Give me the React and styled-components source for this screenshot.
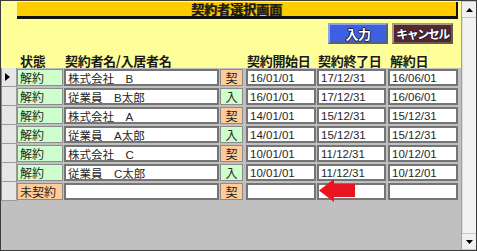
import styled, { createGlobalStyle } from "styled-components";

const GlobalStyle = createGlobalStyle`
  html, body { margin: 0; padding: 0; background: #ffffff; }
  body { font-family: "Liberation Sans", "Noto Sans CJK JP", sans-serif; }
`;

const rows = [
  { status: "解約", name: "株式会社　B", kind: "契", start: "16/01/01", end: "17/12/31", cancel: "16/06/01", current: true },
  { status: "解約", name: "従業員　B太郎", kind: "入", start: "16/01/01", end: "17/12/31", cancel: "16/06/01" },
  { status: "解約", name: "株式会社　A", kind: "契", start: "14/01/01", end: "15/12/31", cancel: "15/12/31" },
  { status: "解約", name: "従業員　A太郎", kind: "入", start: "14/01/01", end: "15/12/31", cancel: "15/12/31" },
  { status: "解約", name: "株式会社　C", kind: "契", start: "10/01/01", end: "11/12/31", cancel: "10/12/01" },
  { status: "解約", name: "従業員　C太郎", kind: "入", start: "10/01/01", end: "11/12/31", cancel: "10/12/01" },
  { status: "未契約", name: "", kind: "契", start: "", end: "", cancel: "" },
];

const App = () => {
  return (
    <>
      <GlobalStyle />
      <Frame>
        <Main>
          <Header>
            <TitleBar>契約者選択画面</TitleBar>
            <ButtonRow>
              <ActionButton $tone="blue">入力</ActionButton>
              <ActionButton $tone="maroon">キャンセル</ActionButton>
            </ButtonRow>
            <LabelRow>
              <Label $w={16} />
              <Label $w={46} $pl={3}>状態</Label>
              <Label $w={156} $pl={2}>契約者名/入居者名</Label>
              <Label $w={26} />
              <Label $w={71} $pl={2}>契約開始日</Label>
              <Label $w={71} $pl={2}>契約終了日</Label>
              <Label $w={70} $pl={3}>解約日</Label>
            </LabelRow>
          </Header>
          <Detail>
            {rows.map((r, i) => (
              <Row key={i}>
                <Selector>{r.current && <Pointer />}</Selector>
                <StatusCell $fresh={r.status === "未契約"}>{r.status}</StatusCell>
                <TextBox $w={155} $ml={1}>{r.name}</TextBox>
                <KindCell $kind={r.kind}>{r.kind}</KindCell>
                <TextBox $w={70} $ml={3}>{r.start}</TextBox>
                <TextBox $w={69} $ml={1}>{r.end}</TextBox>
                <TextBox $w={70} $ml={2}>{r.cancel}</TextBox>
              </Row>
            ))}
            <Arrow width="36" height="23" viewBox="0 0 36 23">
              <polygon points="0,11.5 15,0 15,5 36,5 36,18 15,18 15,23" fill="#e8141f" />
            </Arrow>
          </Detail>
        </Main>
        <ScrollBar>
          <ScrollButton>
            <svg width="7" height="4" viewBox="0 0 7 4"><polygon points="0,4 7,4 3.5,0" fill="#000" /></svg>
          </ScrollButton>
          <ScrollTrack />
          <ScrollButton>
            <svg width="7" height="4" viewBox="0 0 7 4"><polygon points="0,0 7,0 3.5,4" fill="#000" /></svg>
          </ScrollButton>
        </ScrollBar>
      </Frame>
    </>
  );
};

const Frame = styled.div`
  width: 477px;
  height: 251px;
  box-sizing: border-box;
  border: 1px solid #3c3c3c;
  display: flex;
  background: #c0c0c0;
`;

const Main = styled.div`
  width: 461px;
  display: flex;
  flex-direction: column;
`;

const Header = styled.div`
  height: 67px;
  background: #ffff99;
  display: flex;
  flex-direction: column;
`;

const TitleBar = styled.div`
  margin: 1px 0 0 16px;
  width: 441px;
  height: 17px;
  box-sizing: border-box;
  background: #ffcc00;
  border-bottom: 3px solid #111;
  border-right: 2px solid #111;
  text-align: center;
  font-family: "Noto Sans CJK JP", sans-serif;
  font-weight: 700;
  font-size: 13px;
  line-height: 14px;
  color: #1a1a1a;
  text-shadow: 1px 0 0 #6b5500;
`;

const ButtonRow = styled.div`
  margin-top: 4px;
  display: flex;
  justify-content: flex-end;
  gap: 4px;
  padding-right: 8px;
`;

const ActionButton = styled.div`
  height: 21px;
  width: ${(p) => (p.$tone === "blue" ? 60 : 61)}px;
  box-sizing: border-box;
  display: flex;
  align-items: center;
  justify-content: center;
  white-space: nowrap;
  font-family: "Noto Sans CJK JP", sans-serif;
  font-weight: 700;
  font-size: ${(p) => (p.$tone === "blue" ? 13 : 12)}px;
  letter-spacing: ${(p) => (p.$tone === "blue" ? -0.5 : -1.5)}px;
  color: #ffffff;
  background: ${(p) => (p.$tone === "blue" ? "#3d5fe0" : "#5a2626")};
  border: 2px solid;
  border-color: ${(p) =>
    p.$tone === "blue" ? "#8fa2e8 #52617e #52617e #8fa2e8" : "#a09c9c #5e5a5a #5e5a5a #a09c9c"};
  text-shadow: -1px 0 0 #1a1a40, 1px 0 0 #1a1a40, 0 -1px 0 #1a1a40, 0 1px 0 #1a1a40;
`;

const LabelRow = styled.div`
  flex: 1;
  display: flex;
  align-items: flex-end;
`;

const Label = styled.div`
  width: ${(p) => p.$w}px;
  padding-left: ${(p) => p.$pl || 0}px;
  box-sizing: border-box;
  white-space: nowrap;
  font-family: "Noto Sans CJK JP", sans-serif;
  font-weight: 700;
  font-size: 13px;
  line-height: 14px;
  letter-spacing: -0.3px;
  color: #1a1a1a;
`;

const Detail = styled.div`
  flex: 1;
  position: relative;
  background: #c0c0c0;
`;

const Row = styled.div`
  height: 19px;
  display: flex;
  align-items: center;
`;

const Selector = styled.div`
  width: 16px;
  height: 19px;
  box-sizing: border-box;
  background: #e6e6e6;
  border-left: 1px solid #8a8a8a;
  border-right: 1px solid #9a9a9a;
  border-bottom: 1px solid #9a9a9a;
  display: flex;
  align-items: center;
  justify-content: center;
`;

const Pointer = styled.div`
  width: 0;
  height: 0;
  border-top: 4px solid transparent;
  border-bottom: 4px solid transparent;
  border-left: 5px solid #000;
  margin-right: 3px;
`;

const CellBase = styled.div`
  height: 17px;
  box-sizing: border-box;
  display: flex;
  align-items: center;
  white-space: nowrap;
  overflow: hidden;
  font-size: 12px;
  color: #262626;
`;

const StatusCell = styled(CellBase)`
  width: 46px;
  padding-left: 2px;
  background: ${(p) => (p.$fresh ? "#ffcc99" : "#ccffcc")};
  border: 1px solid #8c8c8c;
  font-family: "Noto Sans CJK JP", sans-serif;
`;

const TextBox = styled(CellBase)`
  width: ${(p) => p.$w}px;
  margin-left: ${(p) => p.$ml}px;
  padding-left: 2px;
  background: #ffffff;
  border: 2px solid #747474;
  font-size: 11.5px;
  font-family: "Liberation Sans", "Noto Sans CJK JP", sans-serif;
`;

const KindCell = styled(CellBase)`
  width: 23px;
  margin-left: 1px;
  justify-content: center;
  background: ${(p) => (p.$kind === "契" ? "#ffcc99" : "#ccffcc")};
  border: 1px solid #8c8c8c;
  font-family: "Noto Sans CJK JP", sans-serif;
`;

const Arrow = styled.svg`
  position: absolute;
  left: 318px;
  top: 111px;
`;

const ScrollBar = styled.div`
  width: 14px;
  display: flex;
  flex-direction: column;
  border-left: 1px solid #a0a0a0;
  background: #e8e8e8;
`;

const ScrollButton = styled.div`
  height: 15px;
  display: flex;
  align-items: center;
  justify-content: center;
  background: #f0f0f0;
  border-bottom: 1px solid #c8c8c8;
  border-top: 1px solid #c8c8c8;
`;

const ScrollTrack = styled.div`
  flex: 1;
  background: #f2f2f2;
  border-left: 1px solid #dcdcdc;
`;

export default App;
